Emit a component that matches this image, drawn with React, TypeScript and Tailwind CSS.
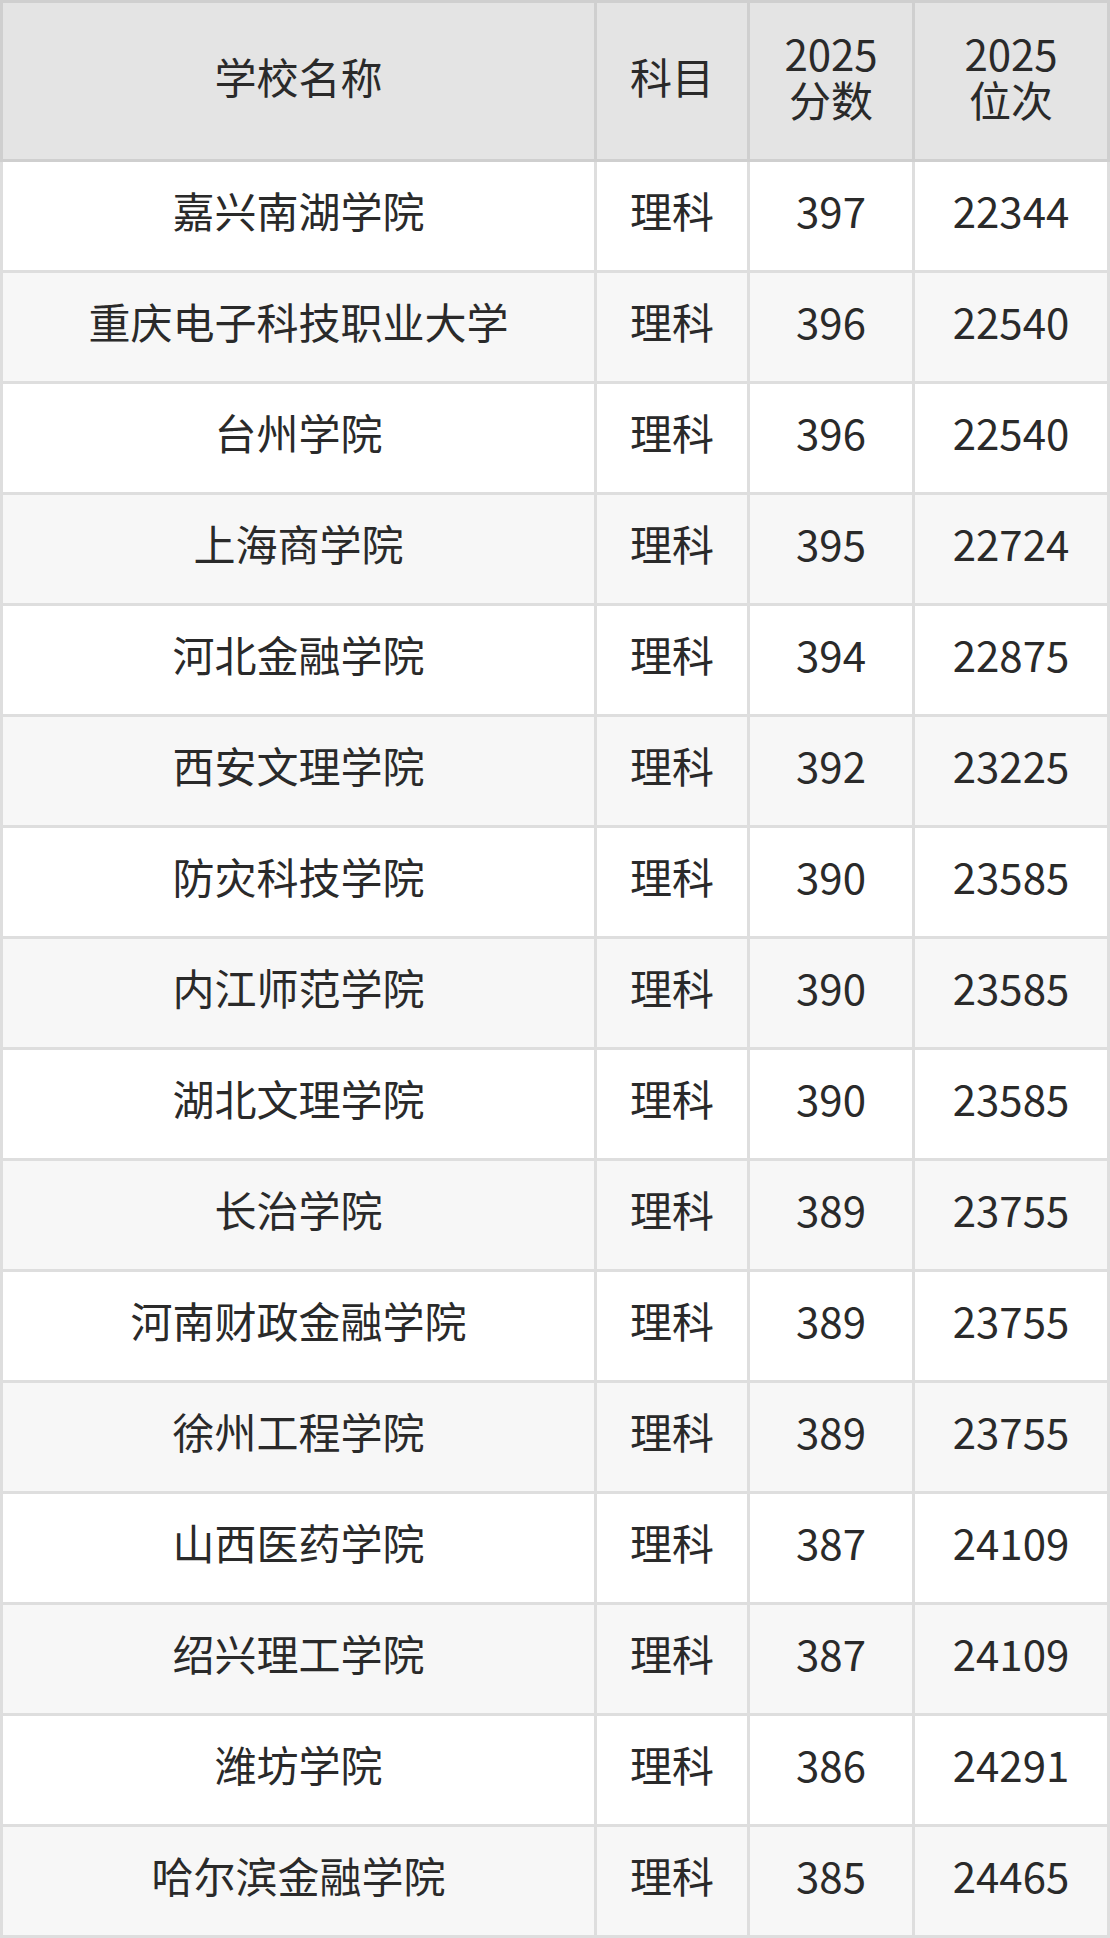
import React from "react";

const rows: [string, string, string, string][] = [
  ["嘉兴南湖学院", "理科", "397", "22344"],
  ["重庆电子科技职业大学", "理科", "396", "22540"],
  ["台州学院", "理科", "396", "22540"],
  ["上海商学院", "理科", "395", "22724"],
  ["河北金融学院", "理科", "394", "22875"],
  ["西安文理学院", "理科", "392", "23225"],
  ["防灾科技学院", "理科", "390", "23585"],
  ["内江师范学院", "理科", "390", "23585"],
  ["湖北文理学院", "理科", "390", "23585"],
  ["长治学院", "理科", "389", "23755"],
  ["河南财政金融学院", "理科", "389", "23755"],
  ["徐州工程学院", "理科", "389", "23755"],
  ["山西医药学院", "理科", "387", "24109"],
  ["绍兴理工学院", "理科", "387", "24109"],
  ["潍坊学院", "理科", "386", "24291"],
  ["哈尔滨金融学院", "理科", "385", "24465"],
];

export default function App() {
  return (
    <div
      className="w-[1110px] bg-white text-[#2a2a2a] text-[42px] font-normal"
      style={{ fontFamily: '"Noto Sans CJK SC", "Noto Sans", sans-serif' }}
    >
      <div className="grid grid-cols-[597px_153px_165px_195px] bg-[#e4e4e4] leading-[46px]">
        <div className="h-[162px] pb-[10px] flex items-center justify-center text-center border-l-[3px] border-t-[3px] border-r-[3px] border-b-[3px] border-[#cfcfcf]">
          学校名称
        </div>
        <div className="h-[162px] pb-[10px] flex items-center justify-center text-center border-t-[3px] border-r-[3px] border-b-[3px] border-[#cfcfcf]">
          科目
        </div>
        <div className="h-[162px] pb-[10px] flex items-center justify-center text-center border-t-[3px] border-r-[3px] border-b-[3px] border-[#cfcfcf]">
          2025
          <br />
          分数
        </div>
        <div className="h-[162px] pb-[10px] flex items-center justify-center text-center border-t-[3px] border-r-[3px] border-b-[3px] border-[#cfcfcf]">
          2025
          <br />
          位次
        </div>
      </div>
      {rows.map((r, i) => (
        <div
          key={i}
          className={
            "grid grid-cols-[597px_153px_165px_195px] leading-[46px] " +
            (i % 2 === 1 ? "bg-[#f7f7f7]" : "bg-white")
          }
        >
          <div className="h-[111px] pb-[13px] flex items-center justify-center border-l-[3px] border-r-[3px] border-b-[3px] border-[#dedede]">
            {r[0]}
          </div>
          <div className="h-[111px] pb-[13px] flex items-center justify-center border-r-[3px] border-b-[3px] border-[#dedede]">
            {r[1]}
          </div>
          <div className="h-[111px] pb-[13px] flex items-center justify-center border-r-[3px] border-b-[3px] border-[#dedede]">
            {r[2]}
          </div>
          <div className="h-[111px] pb-[13px] flex items-center justify-center border-r-[3px] border-b-[3px] border-[#dedede]">
            {r[3]}
          </div>
        </div>
      ))}
    </div>
  );
}
